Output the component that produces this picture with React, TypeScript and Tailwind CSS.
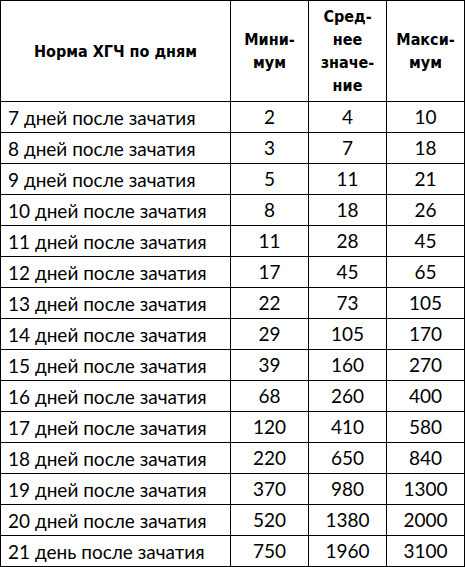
const rows: [string, number, number, number][] = [
  ['7 дней после зачатия', 2, 4, 10],
  ['8 дней после зачатия', 3, 7, 18],
  ['9 дней после зачатия', 5, 11, 21],
  ['10 дней после зачатия', 8, 18, 26],
  ['11 дней после зачатия', 11, 28, 45],
  ['12 дней после зачатия', 17, 45, 65],
  ['13 дней после зачатия', 22, 73, 105],
  ['14 дней после зачатия', 29, 105, 170],
  ['15 дней после зачатия', 39, 160, 270],
  ['16 дней после зачатия', 68, 260, 400],
  ['17 дней после зачатия', 120, 410, 580],
  ['18 дней после зачатия', 220, 650, 840],
  ['19 дней после зачатия', 370, 980, 1300],
  ['20 дней после зачатия', 520, 1380, 2000],
  ['21 день после зачатия', 750, 1960, 3100],
]

const head = "border border-black text-center align-middle font-bold text-[16px] leading-[23px] [font-family:'Liberation_Sans_Narrow','DejaVu_Sans_Condensed','Liberation_Sans',sans-serif] [font-stretch:condensed]"
const cell = 'border border-black text-center align-middle'

export default function App() {
  return (
    <div className="bg-white w-[465px] h-[567px]">
      <table className="table-fixed border-collapse w-[464px] text-black [font-family:'Lato','Open_Sans',sans-serif] text-[19px]">
        <colgroup>
          <col className="w-[230px]" />
          <col className="w-[78px]" />
          <col className="w-[78px]" />
          <col className="w-[78px]" />
        </colgroup>
        <thead>
          <tr className="h-[101px]">
            <th className={head}>Норма ХГЧ по дням</th>
            <th className={head}>Мини-<br />мум</th>
            <th className={head}>Сред-<br />нее<br />значе-<br />ние</th>
            <th className={head}>Макси-<br />мум</th>
          </tr>
        </thead>
        <tbody>
          {rows.map(([label, min, avg, max]) => (
            <tr key={label} className="h-[31px]">
              <td className="border border-black align-middle pl-[7px] leading-none whitespace-nowrap">{label}</td>
              <td className={cell}>{min}</td>
              <td className={cell}>{avg}</td>
              <td className={cell}>{max}</td>
            </tr>
          ))}
        </tbody>
      </table>
    </div>
  )
}
